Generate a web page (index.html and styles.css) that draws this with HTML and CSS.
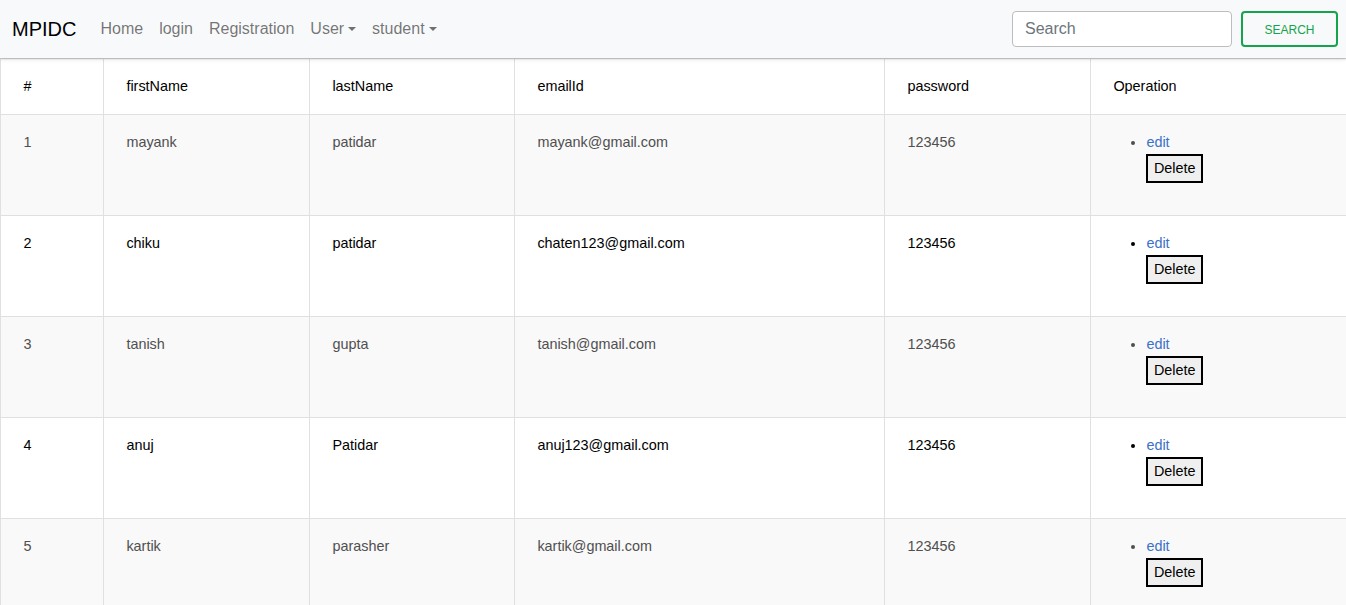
FILE: index.html
```html
<!DOCTYPE html>
<html>
<head>
<meta charset="utf-8">
<link rel="stylesheet" href="styles.css">
</head>
<body>
<nav class="navbar">
  <a class="brand" href="#">MPIDC</a>
  <ul class="nav">
    <li><a class="nav-link" href="#">Home</a></li>
    <li><a class="nav-link" href="#">login</a></li>
    <li><a class="nav-link" href="#">Registration</a></li>
    <li><a class="nav-link dropdown" href="#">User</a></li>
    <li><a class="nav-link dropdown" href="#">student</a></li>
  </ul>
  <form class="search">
    <input class="search-input" type="search" placeholder="Search">
    <button class="search-btn" type="button">Search</button>
  </form>
</nav>
<table class="table">
  <colgroup>
    <col class="c1"><col class="c2"><col class="c3"><col class="c4"><col class="c5"><col class="c6">
  </colgroup>
  <thead>
    <tr><th>#</th><th>firstName</th><th>lastName</th><th>emailId</th><th>password</th><th>Operation</th></tr>
  </thead>
  <tbody>
    <tr class="odd"><td>1</td><td>mayank</td><td>patidar</td><td>mayank@gmail.com</td><td>123456</td>
      <td><ul class="ops"><li><a href="#">edit</a><br><button class="del" type="button">Delete</button></li></ul></td></tr>
    <tr><td>2</td><td>chiku</td><td>patidar</td><td>chaten123@gmail.com</td><td>123456</td>
      <td><ul class="ops"><li><a href="#">edit</a><br><button class="del" type="button">Delete</button></li></ul></td></tr>
    <tr class="odd"><td>3</td><td>tanish</td><td>gupta</td><td>tanish@gmail.com</td><td>123456</td>
      <td><ul class="ops"><li><a href="#">edit</a><br><button class="del" type="button">Delete</button></li></ul></td></tr>
    <tr><td>4</td><td>anuj</td><td>Patidar</td><td>anuj123@gmail.com</td><td>123456</td>
      <td><ul class="ops"><li><a href="#">edit</a><br><button class="del" type="button">Delete</button></li></ul></td></tr>
    <tr class="odd"><td>5</td><td>kartik</td><td>parasher</td><td>kartik@gmail.com</td><td>123456</td>
      <td><ul class="ops"><li><a href="#">edit</a><br><button class="del" type="button">Delete</button></li></ul></td></tr>
  </tbody>
</table>
</body>
</html>
```
FILE: styles.css
```css
* { box-sizing: border-box; }
body {
  margin: 0;
  font-family: "Liberation Sans", Arial, sans-serif;
  font-size: 16px;
  line-height: 1.6;
  color: #000;
  background: #fff;
}
.navbar {
  display: flex;
  align-items: center;
  height: 58px;
  padding: 0 8px 0 12px;
  background: #f8f9fa;
  box-shadow: 0 1px 2px rgba(0,0,0,.18), 0 2px 5px rgba(0,0,0,.06);
  position: relative;
  z-index: 1;
}
.brand {
  font-size: 20px;
  color: #000;
  text-decoration: none;
  margin-right: 16px;
  line-height: 1.5;
}
.nav {
  display: flex;
  list-style: none;
  margin: 0;
  padding: 0;
  flex: 1;
}
.nav-link {
  display: block;
  padding: 8px;
  color: rgba(0,0,0,.55);
  text-decoration: none;
  font-size: 16px;
  line-height: 24px;
}
.dropdown::after {
  content: "";
  display: inline-block;
  margin-left: 4px;
  vertical-align: 3px;
  border-top: 4.5px solid;
  border-left: 4px solid transparent;
  border-right: 4px solid transparent;
}
.search {
  display: flex;
  align-items: center;
  gap: 9px;
}
.search-input {
  width: 220px;
  height: 36px;
  border: 1px solid #bdbdbd;
  border-radius: 4px;
  padding: 4px 12px;
  font-family: inherit;
  font-size: 16px;
  background: #fff;
  outline: none;
}
.search-input::placeholder { color: #6c757d; }
.search-btn {
  width: 97px;
  height: 36px;
  border: 2px solid #14a44d;
  border-radius: 4px;
  background: transparent;
  color: #14a44d;
  font-family: inherit;
  font-size: 12px;
  font-weight: 500;
  text-transform: uppercase;
  padding: 2px 0 0;
}
.table {
  width: 100%;
  border-collapse: collapse;
  table-layout: fixed;
  font-size: 14.4px;
  line-height: 23px;
}
.c1 { width: 103px; }
.c2 { width: 206px; }
.c3 { width: 205px; }
.c4 { width: 370px; }
.c5 { width: 206px; }
.c6 { width: 256px; }
.table th, .table td {
  border: 1px solid #e0e0e0;
  padding: 16px 22.4px;
  text-align: left;
  vertical-align: top;
  font-weight: 400;
}
.table thead th { color: #000; }
.table td { color: #000; }
.table tr.odd td { background: #f9f9f9; color: #4f4f4f; }
.ops {
  margin: 0 0 16px;
  padding-left: 33px;
  list-style: disc;
}
.ops a { color: #3b71ca; text-decoration: none; }
.del {
  font-family: inherit;
  font-size: 14.4px;
  line-height: 23px;
  padding: 1px 5.5px;
  border: 2px solid #000;
  background: #efefef;
  color: #000;
  border-radius: 0;
}
```
